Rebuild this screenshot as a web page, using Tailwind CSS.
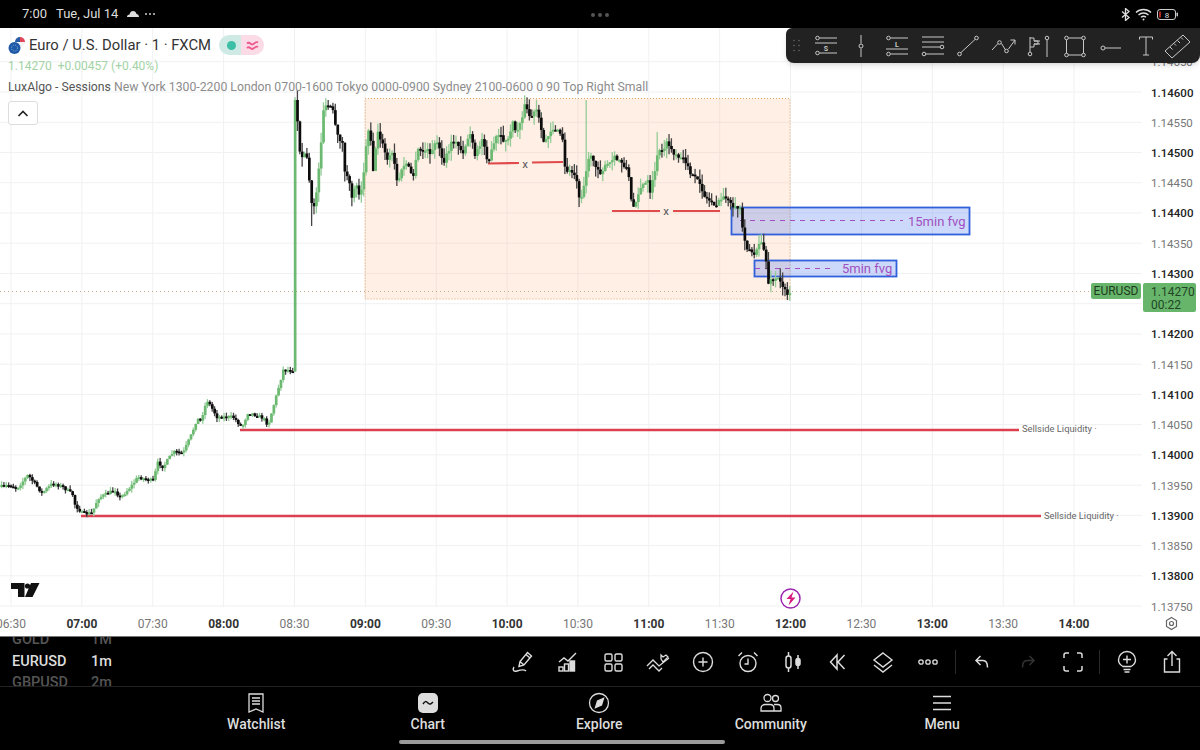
<!DOCTYPE html>
<html lang="en">
<head>
<meta charset="UTF-8" />
<title>EURUSD chart</title>
<script src="https://cdn.jsdelivr.net/npm/@tailwindcss/browser@4"></script>
</head>
<body class="bg-black">
<div class="w-[1200px] h-[750px] overflow-hidden flex flex-col relative bg-black [font-family:Roboto,sans-serif]">

  <!-- Status bar -->
  <div class="h-[28px] shrink-0 flex items-center relative text-[13px] text-[#dddddd]">
    <span class="ml-[22px] w-[34px]">7:00</span>
    <span class="w-[71px]">Tue, Jul 14</span>
    <svg width="12" height="8" viewBox="0 0 12 8" fill="#dddddd"><path d="M0 7c0-1.500 1-2.500 2.500-2.500C3 2 4.500 1 6 1c1.800 0 3 1 3.500 3C11 4 12 5.500 12 7z"/></svg>
    <span class="ml-[6px] flex gap-[2px]"><i class="w-[2px] h-[2px] rounded-full bg-[#cccccc]"></i><i class="w-[2px] h-[2px] rounded-full bg-[#cccccc]"></i><i class="w-[2px] h-[2px] rounded-full bg-[#cccccc]"></i></span>
    <span class="absolute left-[591px] top-[13px] flex gap-[3px]"><i class="w-[4px] h-[4px] rounded-full bg-[#555555]"></i><i class="w-[4px] h-[4px] rounded-full bg-[#555555]"></i><i class="w-[4px] h-[4px] rounded-full bg-[#555555]"></i></span>
    <div class="ml-auto mr-[21px] flex items-center gap-[5px]">
      <svg width="9" height="13" viewBox="0 0 9 13" fill="none" stroke="#dddddd" stroke-width="1.300"><path d="M1 3.500l7 6-3.500 3V.500l3.500 3-7 6"/></svg>
      <svg width="17" height="13" viewBox="0 0 17 13" fill="none" stroke="#dddddd" stroke-width="1.400"><path d="M1 4.500c4-4 11-4 15 0M3.500 7c2.800-2.600 7.200-2.600 10 0M6 9.300c1.400-1.200 3.600-1.200 5 0"/><circle cx="8.500" cy="11.500" r="1" fill="#dddddd" stroke="none"/></svg>
      <svg width="22" height="11" viewBox="0 0 22 11"><rect x=".5" y=".5" width="18" height="10" rx="2.500" fill="none" stroke="#cccccc"/><rect x="2" y="2.500" width="2" height="6" fill="#b3261e"/><rect x="19.500" y="3.500" width="1.500" height="4" rx=".7" fill="#cccccc"/><text x="10" y="8.500" text-anchor="middle" font-size="8" fill="#dddddd">8</text></svg>
    </div>
  </div>

  <!-- Chart canvas -->
  <div class="relative flex-1 bg-white border-b border-[#777777]">
    <svg id="chart" class="absolute left-0 top-0" width="1200" height="608" viewBox="0 28 1200 608">
      <g id="grid"></g>
      <rect x="365" y="98.500" width="425" height="200.500" fill="#ff9a5c" fill-opacity=".16" stroke="#e0a060" stroke-dasharray="1 2"/>
      <line x1="0" x2="1090" y1="291.500" y2="291.500" stroke="#c4ae8c" stroke-dasharray="1 3"/>

      <!-- Liquidity lines -->
      <line x1="240" x2="1019" y1="430" y2="430" stroke="#dc4050" stroke-width="2.400"/>
      <line x1="81" x2="1041" y1="516" y2="516" stroke="#dc4050" stroke-width="2.400"/>
      <text x="1022" y="432" font-size="9.400" fill="#666666">Sellside Liquidity ·</text>
      <text x="1044" y="519" font-size="9.400" fill="#666666">Sellside Liquidity ·</text>

      <!-- Equal lows -->
      <line x1="488" x2="519" y1="163.500" y2="163" stroke="#e04a4a" stroke-width="2.200"/>
      <line x1="532" x2="563" y1="162.500" y2="162" stroke="#e04a4a" stroke-width="2.200"/>
      <text x="525" y="167.500" font-size="11.500" text-anchor="middle" fill="#555555">x</text>
      <line x1="612" x2="660" y1="211" y2="211" stroke="#e04a4a" stroke-width="2.200"/>
      <line x1="673" x2="720" y1="211" y2="211" stroke="#e04a4a" stroke-width="2.200"/>
      <text x="666" y="215" font-size="11.500" text-anchor="middle" fill="#555555">x</text>

      <!-- FVG boxes -->
      <rect x="731.500" y="207.500" width="238" height="27" fill="#3d6cf0" fill-opacity=".26" stroke="#3060dc" stroke-width="1.800"/>
      <line x1="740" x2="903" y1="220.500" y2="220.500" stroke="#a050c0" stroke-dasharray="5 5"/>
      <text x="908" y="225.500" font-size="13" fill="#a050c0">15min fvg</text>
      <rect x="754.500" y="260.500" width="142" height="16" fill="#3d6cf0" fill-opacity=".26" stroke="#3060dc" stroke-width="1.800"/>
      <line x1="755" x2="833" y1="268.500" y2="268.500" stroke="#a050c0" stroke-dasharray="5 5"/>
      <text x="842" y="273" font-size="13" fill="#a050c0">5min fvg</text>

      <g id="candles" class="blur-[0.4px]"></g>

      <!-- Price and time axes -->
      <g id="axes"></g>

      <!-- TradingView mark -->
      <path d="M11 583h13.500v14h-6.500v-8h-7z M31 583h8.500l-7 14h-7.500z" fill="#111111"/>
      <circle cx="27.500" cy="586" r="2.600" fill="#111111"/>

      <!-- Bolt marker -->
      <circle cx="790.500" cy="598.500" r="9.500" fill="#ffffff" stroke="#9c27b0" stroke-width="1.500"/>
      <path d="M793.500 591.500l-7 7.500h4l-2 6.500 7-8h-4z" fill="#d81b80"/>

      <!-- Settings -->
      <path d="M1171.500 617.500l5 3v6l-5 3-5-3v-6z" fill="none" stroke="#666666" stroke-width="1.200"/>
      <circle cx="1171.500" cy="623.500" r="2" fill="none" stroke="#666666" stroke-width="1.200"/>
    </svg>

    <!-- Legend -->
    <div class="absolute left-[8px] top-[6px]">
      <div class="flex items-center h-[22px]">
        <svg width="18" height="20" viewBox="0 0 18 20" class="mr-[3px]">
          <circle cx="12" cy="7" r="5" fill="#f4f4f4"/>
          <path d="M12 2a5 5 0 0 1 5 5h-5z" fill="#e0455a"/>
          <path d="M7 7a5 5 0 0 1 5-5v5z" fill="#2a5ca8"/>
          <circle cx="6.500" cy="13" r="6" fill="#1f5aa8"/>
          <circle cx="6.500" cy="13" r="3" fill="none" stroke="#8fb0dc" stroke-dasharray="1 1.400"/>
        </svg>
        <span class="text-[14.800px] text-[#333333]">Euro / U.S. Dollar · 1 · FXCM</span>
        <div class="ml-[8px] w-[45px] h-[20px] flex rounded-full overflow-hidden">
          <div class="w-[22px] bg-[#cfeae5] flex items-center justify-end pr-[5px]"><i class="w-[9px] h-[9px] rounded-full bg-[#3dbfa6]"></i></div>
          <div class="flex-1 bg-[#fbdbe6] flex items-center justify-center">
            <svg width="13" height="10" viewBox="0 0 13 10" fill="none" stroke="#ee5a8e" stroke-width="1.800"><path d="M1 3.500c2.500-2.500 4 1.500 5.500 1S10 1 12 2.500M1 8c2.500-2.500 4 1.500 5.500 1S10 5.500 12 7"/></svg>
          </div>
        </div>
      </div>
      <div class="h-[20px] flex items-center gap-[6px] text-[12px] text-[#a3d3a5]"><span>1.14270</span><span>+0.00457 (+0.40%)</span></div>
      <div class="h-[23px] flex items-center text-[12.250px] text-[#8c8c8c] whitespace-nowrap"><span class="text-[#555555]">LuxAlgo - Sessions</span>&nbsp;New York 1300-2200 London 0700-1600 Tokyo 0000-0900 Sydney 2100-0600 0 90 Top Right Small</div>
      <div class="mt-[2px] w-[30px] h-[24px] bg-white border border-[#dddddd] rounded-[3px] flex items-center justify-center">
        <svg width="12" height="7" viewBox="0 0 12 7" fill="none" stroke="#222222" stroke-width="1.600"><path d="M1.500 6l4.500-4.500L10.500 6"/></svg>
      </div>
    </div>

    <!-- Drawing toolbar -->
    <div class="absolute left-[786px] top-0 w-[414px] h-[35px] bg-[#222222] rounded-b-[8px] rounded-tl-[6px] shadow-md flex items-center text-[#c8c8c8]">
      <div class="w-[22px] flex justify-center">
        <svg width="8" height="13" viewBox="0 0 8 13" fill="#666666"><circle cx="1" cy="1.500" r=".8"/><circle cx="6" cy="1.500" r=".8"/><circle cx="1" cy="6.500" r=".8"/><circle cx="6" cy="6.500" r=".8"/><circle cx="1" cy="11.500" r=".8"/><circle cx="6" cy="11.500" r=".8"/></svg>
      </div>
      <div class="w-[35.600px] flex justify-center">
        <svg width="24" height="24" viewBox="0 0 24 24" fill="none" stroke="currentColor"><circle cx="3.500" cy="4" r="1.800"/><path d="M5.500 4H23M1 9h22"/><text x="12" y="16.500" font-size="7" font-weight="700" text-anchor="middle" fill="currentColor" stroke="none">S</text><circle cx="3.500" cy="19" r="1.800"/><path d="M5.500 19H23"/></svg>
      </div>
      <div class="w-[35.600px] flex justify-center">
        <svg width="24" height="24" viewBox="0 0 24 24" fill="none" stroke="currentColor"><path d="M12 1v8.500M12 14.500V23"/><circle cx="12" cy="12" r="2"/></svg>
      </div>
      <div class="w-[35.600px] flex justify-center">
        <svg width="24" height="24" viewBox="0 0 24 24" fill="none" stroke="currentColor"><circle cx="3.500" cy="4" r="1.800"/><path d="M5.500 4H23M1 15h22"/><text x="12" y="12.500" font-size="7" font-weight="700" text-anchor="middle" fill="currentColor" stroke="none">L</text><circle cx="3.500" cy="20" r="1.800"/><path d="M5.500 20H23"/></svg>
      </div>
      <div class="w-[35.600px] flex justify-center">
        <svg width="24" height="24" viewBox="0 0 24 24" fill="none" stroke="currentColor"><path d="M1 3h22M1 8h22M1 13h18"/><circle cx="21" cy="13" r="1.800"/><circle cx="3" cy="20" r="1.800"/><path d="M5 20h18"/></svg>
      </div>
      <div class="w-[35.600px] flex justify-center">
        <svg width="24" height="24" viewBox="0 0 24 24" fill="none" stroke="currentColor"><circle cx="3.500" cy="20" r="1.800"/><circle cx="20.500" cy="4" r="1.800"/><path d="M5 18.500L19 5.500"/></svg>
      </div>
      <div class="w-[35.600px] flex justify-center">
        <svg width="26" height="24" viewBox="0 0 26 24" fill="none" stroke="currentColor"><path d="M1 16l6-6.500M10.500 9.500l4 6.500M17.500 15L24 6M19.500 6H24v4.500"/><circle cx="8.500" cy="8.500" r="1.800"/><circle cx="15.500" cy="17" r="1.800"/></svg>
      </div>
      <div class="w-[35.600px] flex justify-center">
        <svg width="24" height="24" viewBox="0 0 24 24" fill="none" stroke="currentColor"><path d="M3 3v15M3 4h4v3h4v3H7v3H3M7 7h6M7 10h6"/><circle cx="3" cy="20" r="1.800"/><circle cx="20" cy="4" r="1.800"/><path d="M20 6v17"/></svg>
      </div>
      <div class="w-[35.600px] flex justify-center">
        <svg width="24" height="24" viewBox="0 0 24 24" fill="none" stroke="currentColor"><rect x="3.500" y="4" width="17" height="17"/><g fill="#222222"><circle cx="3.500" cy="4" r="1.800"/><circle cx="20.500" cy="4" r="1.800"/><circle cx="3.500" cy="21" r="1.800"/><circle cx="20.500" cy="21" r="1.800"/></g></svg>
      </div>
      <div class="w-[35.600px] flex justify-center">
        <svg width="24" height="24" viewBox="0 0 24 24" fill="none" stroke="currentColor"><circle cx="4" cy="14" r="2"/><path d="M6 14h16"/></svg>
      </div>
      <div class="w-[35.600px] flex justify-center">
        <svg width="20" height="22" viewBox="0 0 20 22" fill="none" stroke="currentColor"><path d="M3.500 4.500V2h13v2.500M10 2v18M7 20h6"/></svg>
      </div>
      <div class="w-[30px] flex justify-start">
        <svg width="28" height="26" viewBox="0 0 28 26" fill="none" stroke="currentColor"><path d="M1 18L19 2l7 7-18 16zM6 14l2.500 2.500M10 10.500l2 2M13.500 7.500l2.500 2.500M17 4.500l2 2"/></svg>
      </div>
    </div>

    <!-- Price tags -->
    <div class="absolute left-[1091px] top-[255px] w-[50px] h-[16px] bg-[#66b56b] rounded-[2px] text-[12px] text-[#1f3a20] flex items-center justify-center">EURUSD</div>
    <div class="absolute left-[1143px] top-[255px] w-[53px] h-[29px] bg-[#66b56b] rounded-[2px] text-[12px] leading-[13px] text-[#234524] pl-[8px] pt-[3px]">1.14270<br>00:22</div>
  </div>

  <!-- Bottom toolbar -->
  <div class="h-[50px] shrink-0 flex items-center border-b border-[#222222] text-[#dddddd]">
    <div class="w-[500px] h-full overflow-hidden flex flex-col justify-center pl-[12px] text-[14.500px] font-medium">
      <div class="h-[21.500px] shrink-0 flex items-center text-[#555555]"><span class="w-[79px]">GOLD</span><span>1M</span></div>
      <div class="h-[21.500px] shrink-0 flex items-center text-[#dddddd]"><span class="w-[79px]">EURUSD</span><span>1m</span></div>
      <div class="h-[21.500px] shrink-0 flex items-center text-[#555555]"><span class="w-[79px]">GBPUSD</span><span>2m</span></div>
    </div>

    <div class="w-[45px] flex justify-center">
      <svg width="24" height="24" viewBox="0 0 24 24" fill="none" stroke="currentColor" stroke-width="1.400"><path d="M8 16.500l1-5L16.500 2.500l4 3.500-7.500 9zM9 11.500l4 3.500M15 4.500l4 3.500"/><path d="M3 17c-2 3 0 5 3 4s7-2 9 0"/></svg>
    </div>
    <div class="w-[45px] flex justify-center">
      <svg width="24" height="24" viewBox="0 0 24 24" fill="none" stroke="currentColor" stroke-width="1.400"><path d="M3 12l5-4 4 3 8-8"/><rect x="3" y="17" width="4" height="4"/><rect x="8.500" y="14" width="4" height="7"/><rect x="14" y="11" width="4.500" height="10" fill="currentColor"/></svg>
    </div>
    <div class="w-[45px] flex justify-center">
      <svg width="22" height="22" viewBox="0 0 22 22" fill="none" stroke="currentColor" stroke-width="1.400"><rect x="3" y="3" width="7" height="7" rx="1.500"/><rect x="13" y="3" width="7" height="7" rx="1.500"/><rect x="3" y="13" width="7" height="7" rx="1.500"/><rect x="13" y="13" width="7" height="7" rx="1.500"/></svg>
    </div>
    <div class="w-[45px] flex justify-center">
      <svg width="24" height="24" viewBox="0 0 24 24" fill="none" stroke="currentColor" stroke-width="1.300"><path d="M1 16l6-6 6 6 10-8"/><path d="M3 19l4-4 6 6 3-3M15 9l2 3 5-5-2-2-3 2-2-2z"/></svg>
    </div>
    <div class="w-[45px] flex justify-center">
      <svg width="22" height="22" viewBox="0 0 22 22" fill="none" stroke="currentColor" stroke-width="1.400"><circle cx="11" cy="11" r="9.500"/><path d="M11 6.500v9M6.500 11h9"/></svg>
    </div>
    <div class="w-[45px] flex justify-center">
      <svg width="24" height="24" viewBox="0 0 24 24" fill="none" stroke="currentColor" stroke-width="1.400"><circle cx="12" cy="13.500" r="8"/><path d="M12 8.500v5.500H8.500M2.500 6L6 2.500M21.500 6L18 2.500"/></svg>
    </div>
    <div class="w-[45px] flex justify-center">
      <svg width="24" height="24" viewBox="0 0 24 24" fill="none" stroke="currentColor" stroke-width="1.500"><rect x="5" y="6" width="5" height="12" rx="2.500"/><path d="M7.500 2v4M7.500 18v4"/><rect x="15" y="8.500" width="4" height="7" rx="2" fill="currentColor"/><path d="M17 5v3.500M17 15.500V19"/></svg>
    </div>
    <div class="w-[45px] flex justify-center">
      <svg width="20" height="20" viewBox="0 0 20 20" fill="none" stroke="currentColor" stroke-width="1.500"><path d="M9 3l-6.500 7L9 17zM16.500 3L10 10l6.500 7"/></svg>
    </div>
    <div class="w-[45px] flex justify-center">
      <svg width="24" height="24" viewBox="0 0 24 24" fill="none" stroke="currentColor" stroke-width="1.400"><path d="M12 3l9 7-9 7-9-7z"/><path d="M3 15l9 7 9-7"/></svg>
    </div>
    <div class="w-[45px] flex justify-center">
      <svg width="20" height="8" viewBox="0 0 20 8" fill="none" stroke="currentColor" stroke-width="1.300"><circle cx="3" cy="4" r="2.200"/><circle cx="10" cy="4" r="2.200"/><circle cx="17" cy="4" r="2.200"/></svg>
    </div>
    <div class="w-px h-[24px] ml-[5px] bg-[#2a2a2a]"></div>
    <div class="w-[45px] ml-[3px] flex justify-center">
      <svg width="16" height="16" viewBox="0 0 16 16" fill="none" stroke="currentColor" stroke-width="1.500"><path d="M6.500 2L2 6.500 6.500 11M2.500 6.500H9c3 0 4.500 2.500 4.500 7"/></svg>
    </div>
    <div class="w-[45px] ml-px flex justify-center">
      <svg width="16" height="16" viewBox="0 0 16 16" fill="none" stroke="#333333" stroke-width="1.500"><path d="M9.500 2L14 6.500 9.500 11M13.500 6.500H7c-3 0-4.500 2.500-4.500 7"/></svg>
    </div>
    <div class="w-[45px] flex justify-center">
      <svg width="22" height="22" viewBox="0 0 22 22" fill="none" stroke="currentColor" stroke-width="1.500"><path d="M2 7V4a2 2 0 0 1 2-2h3M15 2h3a2 2 0 0 1 2 2v3M20 15v3a2 2 0 0 1-2 2h-3M7 20H4a2 2 0 0 1-2-2v-3"/></svg>
    </div>
    <div class="w-px h-[24px] ml-[4px] bg-[#2a2a2a]"></div>
    <div class="w-[45px] ml-[4px] flex justify-center">
      <svg width="22" height="24" viewBox="0 0 22 24" fill="none" stroke="currentColor" stroke-width="1.400"><path d="M7 16.500C3.500 14.500 2.500 12 2.500 10a8.500 8.500 0 0 1 17 0c0 2-1 4.500-4.500 6.500zM7.500 19.500h7M8.500 22h5M11 5.500v8M7 9.500h8"/></svg>
    </div>
    <div class="w-[45px] flex justify-center">
      <svg width="22" height="24" viewBox="0 0 22 24" fill="none" stroke="currentColor" stroke-width="1.400"><path d="M6.500 9H3.500v13h15V9h-3M11 16V2M6.500 6L11 1.500 15.500 6"/></svg>
    </div>
  </div>

  <!-- Navigation -->
  <div class="h-[63px] shrink-0 flex pl-[170.500px] pt-[5px] text-[14px] font-medium text-[#dddddd]">
    <div class="w-[171.500px] flex flex-col items-center">
      <svg width="22" height="22" viewBox="0 0 22 22" fill="none" stroke="currentColor" stroke-width="1.300"><path d="M4 2h14v18l-7-3-7 3zM7 6h8M7 9h8M7 12h8"/></svg>
      <span>Watchlist</span>
    </div>
    <div class="w-[171.500px] flex flex-col items-center">
      <svg width="22" height="22" viewBox="0 0 22 22"><rect x="1" y="1" width="20" height="20" rx="5" fill="#dddddd"/><path d="M6 12c2-3 3-3 5-1s3 1 5-1" fill="none" stroke="#111111" stroke-width="1.500"/></svg>
      <span>Chart</span>
    </div>
    <div class="w-[171.500px] flex flex-col items-center">
      <svg width="22" height="22" viewBox="0 0 22 22" fill="none" stroke="currentColor" stroke-width="1.300"><circle cx="11" cy="11" r="9.500"/><path d="M15.500 6.500l-2 6.500-6 2.500 2-6.500z" fill="currentColor"/></svg>
      <span>Explore</span>
    </div>
    <div class="w-[171.500px] flex flex-col items-center">
      <svg width="24" height="22" viewBox="0 0 24 22" fill="none" stroke="currentColor" stroke-width="1.300"><circle cx="8.500" cy="6" r="3.500"/><circle cx="16.500" cy="6.500" r="3"/><path d="M2 19v-2.500c0-2.500 2-4 4-4h5c2.500 0 4 1.500 4 4V19zM15 12.500h3.500c2 0 3.500 1.500 3.500 3.500v3h-7"/></svg>
      <span>Community</span>
    </div>
    <div class="w-[171.500px] flex flex-col items-center">
      <svg width="22" height="22" viewBox="0 0 22 22" fill="none" stroke="currentColor" stroke-width="1.600"><path d="M2 4.500h18M2 11h18M2 17.500h18"/></svg>
      <span>Menu</span>
    </div>
  </div>

  <!-- Home indicator -->
  <div class="absolute left-[399px] top-[740px] w-[326px] h-[4px] rounded-full bg-[#9a9a9a]"></div>
</div>

<script>
  const NS = 'http://www.w3.org/2000/svg';

  function add(parent, tag, attrs, text) {
    const el = document.createElementNS(NS, tag);
    for (const k in attrs) el.setAttribute(k, attrs[k]);
    if (text) el.textContent = text;
    parent.appendChild(el);
  }

  // Grid and axis labels
  const grid = document.getElementById('grid');
  const axes = document.getElementById('axes');
  const times = ['06:30', '07:00', '07:30', '08:00', '08:30', '09:00', '09:30', '10:00', '10:30', '11:00', '11:30', '12:00', '12:30', '13:00', '13:30', '14:00'];
  times.forEach((t, i) => {
    const x = 11 + i * 70.87;
    add(grid, 'line', { x1: x, x2: x, y1: 28, y2: 607, stroke: '#f0f1f3' });
    const hour = t.endsWith(':00');
    add(axes, 'text', { x: x, y: 627.5, 'text-anchor': 'middle', 'font-size': 12, 'font-weight': hour ? 700 : 400, fill: hour ? '#333333' : '#777777' }, t);
  });
  for (let i = -1; i <= 17; i++) {
    const y = 92 + i * 30.24;
    add(grid, 'line', { x1: 0, x2: 1142, y1: y, y2: y, stroke: '#f0f1f3' });
    if (i === 7) continue; // hidden behind the price tag
    const price = (114600 - i * 50) / 100000;
    const round = i % 2 === 0;
    add(axes, 'text', { x: 1151, y: y + 4.5, 'font-size': 11.5, 'font-weight': round ? 500 : 400, fill: round ? '#222222' : '#777777' }, price.toFixed(5));
  }

  // Close path of the session, read off the picture
  const path = [[0,487],[10,485],[17,488],[28,475],[42,493],[53,483],[63,487],[73,495],[75,505],[83,514],[92,513],[98,498],[115,490],[120,498],[132,485],[138,477],[153,481],[158,462],[163,467],[173,452],[183,453],[192,433],[197,418],[200,422],[207,400],[217,417],[233,417],[242,427],[248,412],[263,418],[268,425],[277,393],[283,370],[293,370],[295,100],[298,130],[300,158],[303,153],[307,158],[310,190],[312,210],[315,203],[320,157],[323,110],[330,105],[333,113],[337,137],[342,140],[345,173],[348,180],[352,197],[355,183],[360,195],[363,177],[368,128],[370,130],[373,170],[378,130],[387,160],[393,153],[397,183],[405,162],[413,177],[418,150],[432,152],[437,140],[443,165],[453,140],[463,152],[470,133],[475,157],[483,137],[488,163],[497,135],[507,143],[512,123],[517,132],[525,105],[530,118],[537,110],[543,143],[552,128],[562,135],[565,170],[575,173],[580,200],[585,180],[588,157],[593,160],[600,172],[615,158],[622,162],[628,170],[632,210],[640,188],[648,182],[650,195],[658,153],[668,143],[675,157],[687,162],[692,177],[700,183],[705,198],[717,205],[725,195],[733,210],[740,207],[742,227],[747,247],[755,255],[762,240],[767,267],[768,283],[777,278],[785,288],[788,295],[790,292]];

  function priceAt(x) {
    for (let i = 1; i < path.length; i++) {
      if (x <= path[i][0]) {
        const [x0, y0] = path[i - 1], [x1, y1] = path[i];
        return y0 + (y1 - y0) * (x - x0) / (x1 - x0);
      }
    }
    return path[path.length - 1][1];
  }

  let seed = 7;
  function rnd() {
    seed = (seed * 16807) % 2147483647;
    return seed / 2147483647;
  }

  const candles = document.getElementById('candles');
  let prev = priceAt(0);
  for (let k = -125; k <= 209; k++) {
    const x = 295 + k * 2.367;
    if (x < 0) continue;
    const close = priceAt(x) + (k === 0 ? 0 : (rnd() - 0.5) * (x > 295 ? 6 : 3.5));
    const up = close < prev;
    const top = Math.min(prev, close), bottom = Math.max(prev, close);
    const scale = x > 295 ? 10 : 4;
    let high = top - rnd() * scale, low = bottom + rnd() * scale;
    if (Math.abs(x - 587) < 1.2) high = 100;
    if (Math.abs(x - 658) < 1.2) high = 132;
    if (Math.abs(x - 312) < 1.2) low = 226;
    const color = up ? '#6cba71' : '#0c0c0c';
    add(candles, 'rect', { x: x - 0.6, y: high, width: 1.3, height: low - high, fill: up ? '#93cc97' : '#444444' });
    add(candles, 'rect', { x: x - 1.2, y: top, width: 2.7, height: Math.max(bottom - top, 1.8), fill: color });
    prev = close;
  }
</script>
</body>
</html>
